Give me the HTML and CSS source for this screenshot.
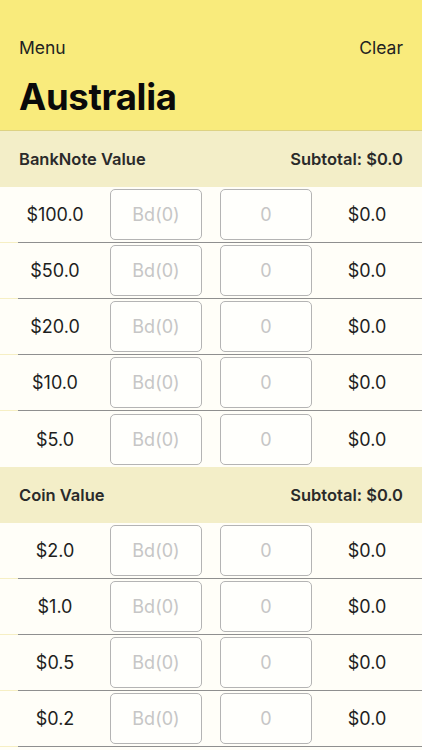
FILE: index.html
```html
<!DOCTYPE html>
<html>
<head>
<meta charset="utf-8">
<link rel="stylesheet" href="styles.css">
</head>
<body>
<div class="app">
  <header class="header">
    <div class="nav">
      <span class="nav-btn">Menu</span>
      <span class="nav-btn">Clear</span>
    </div>
    <h1 class="title">Australia</h1>
  </header>

  <section class="group">
    <div class="group-head"><span>BankNote Value</span><span>Subtotal: $0.0</span></div>
    <div class="row"><span class="denom">$100.0</span><div class="field">Bd(0)</div><div class="field">0</div><span class="amount">$0.0</span></div>
    <div class="sep"></div>
    <div class="row"><span class="denom">$50.0</span><div class="field">Bd(0)</div><div class="field">0</div><span class="amount">$0.0</span></div>
    <div class="sep"></div>
    <div class="row"><span class="denom">$20.0</span><div class="field">Bd(0)</div><div class="field">0</div><span class="amount">$0.0</span></div>
    <div class="sep"></div>
    <div class="row"><span class="denom">$10.0</span><div class="field">Bd(0)</div><div class="field">0</div><span class="amount">$0.0</span></div>
    <div class="sep"></div>
    <div class="row last"><span class="denom">$5.0</span><div class="field">Bd(0)</div><div class="field">0</div><span class="amount">$0.0</span></div>
  </section>

  <section class="group">
    <div class="group-head"><span>Coin Value</span><span>Subtotal: $0.0</span></div>
    <div class="row"><span class="denom">$2.0</span><div class="field">Bd(0)</div><div class="field">0</div><span class="amount">$0.0</span></div>
    <div class="sep"></div>
    <div class="row"><span class="denom">$1.0</span><div class="field">Bd(0)</div><div class="field">0</div><span class="amount">$0.0</span></div>
    <div class="sep"></div>
    <div class="row"><span class="denom">$0.5</span><div class="field">Bd(0)</div><div class="field">0</div><span class="amount">$0.0</span></div>
    <div class="sep"></div>
    <div class="row"><span class="denom">$0.2</span><div class="field">Bd(0)</div><div class="field">0</div><span class="amount">$0.0</span></div>
    <div class="sep"></div>
  </section>
</div>
</body>
</html>
```

FILE: styles.css
```css
html, body {
  margin: 0;
  padding: 0;
  background: #fffef8;
}
body {
  font-family: Inter, "Liberation Sans", sans-serif;
  color: #1c1c1c;
  width: 422px;
  height: 750px;
  overflow: hidden;
}
.header {
  background: #f9eb7c;
  height: 105px;
  border-bottom: 1px solid #ddd283;
  padding: 25px 19px 0 19px;
}
.nav {
  display: flex;
  justify-content: space-between;
  align-items: center;
  height: 44px;
}
.nav-btn {
  font-size: 17.5px;
  color: #222;
}
.title {
  margin: 0;
  margin-top: 7px;
  font-size: 36.5px;
  line-height: 42px;
  font-weight: 700;
  color: #0a0a0a;
  letter-spacing: -0.3px;
}
.group-head {
  background: #f3eec8;
  height: 56px;
  display: flex;
  justify-content: space-between;
  align-items: center;
  padding: 0 19px;
  font-size: 16.5px;
  font-weight: 600;
  color: #2a2a2a;
}
.row {
  height: 55px;
  display: grid;
  grid-template-columns: 110px 92px 110px 110px;
  align-items: center;
  background: #fffef8;
}
.row.last {
  height: 56px;
}
.row .field:nth-of-type(2) {
  margin-left: 18px;
}
.denom, .amount {
  text-align: center;
  font-size: 18px;
  color: #1e1e1e;
}
.field {
  box-sizing: border-box;
  width: 92px;
  height: 51px;
  border: 1px solid #b4b4b4;
  border-radius: 5px;
  background: #fffffc;
  display: flex;
  align-items: center;
  justify-content: center;
  font-size: 18px;
  color: #c6c6c6;
}
.sep {
  height: 1px;
  background: linear-gradient(to right, #f6efc4 18px, #8f8f8f 18px);
}
```
